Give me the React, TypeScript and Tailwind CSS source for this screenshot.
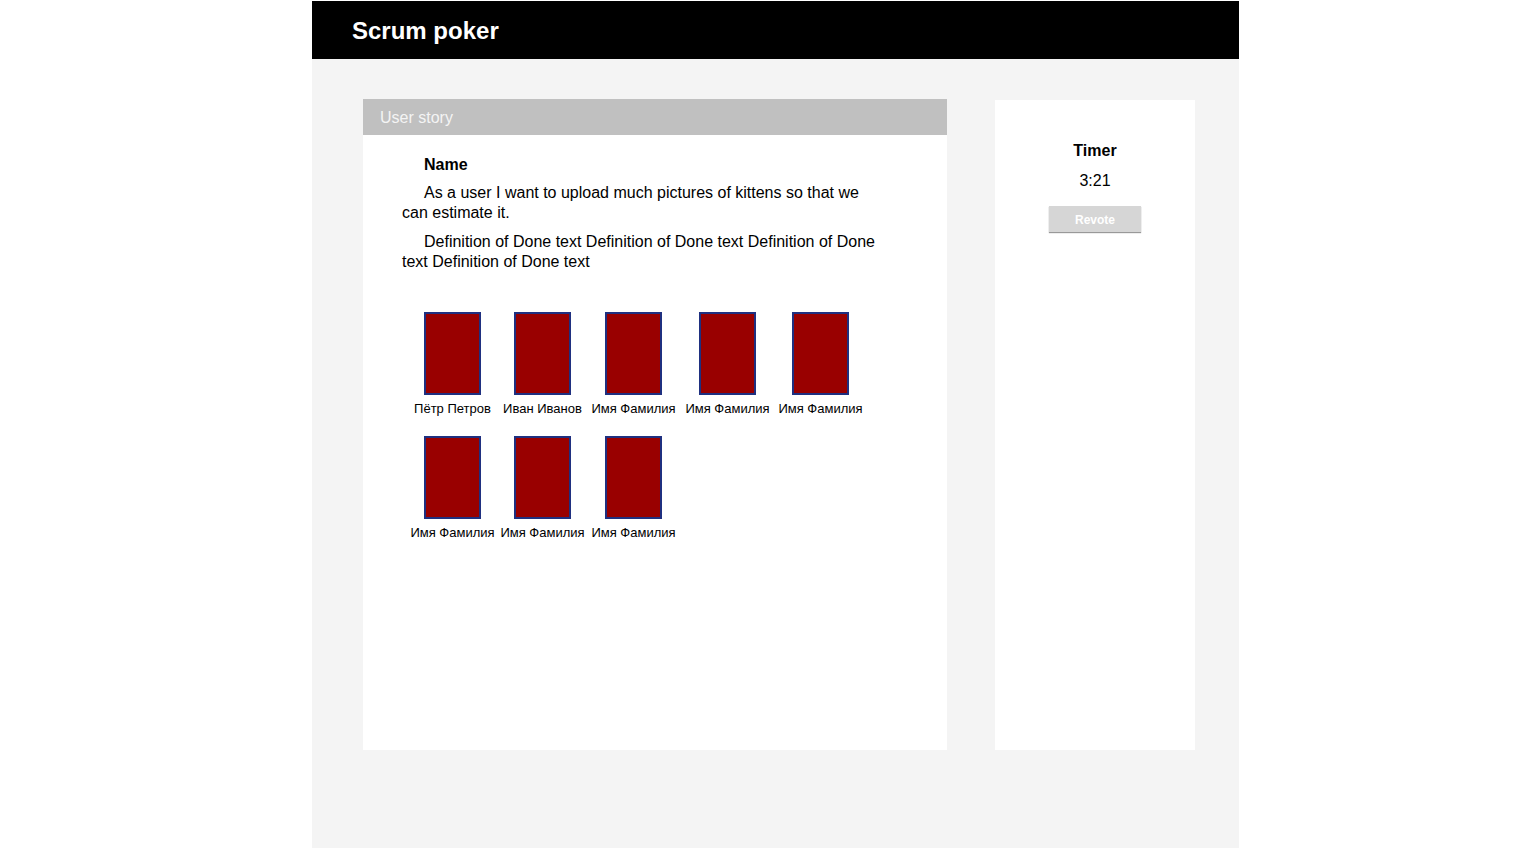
const row1 = [
    { name: "Пётр Петров", gap: "ml-0" },
    { name: "Иван Иванов", gap: "ml-[33px]" },
    { name: "Имя Фамилия", gap: "ml-[34px]" },
    { name: "Имя Фамилия", gap: "ml-[37px]" },
    { name: "Имя Фамилия", gap: "ml-[36px]" },
];

const row2 = [
    { name: "Имя Фамилия", gap: "ml-0" },
    { name: "Имя Фамилия", gap: "ml-[33px]" },
    { name: "Имя Фамилия", gap: "ml-[34px]" },
];

function PlayerCard({ name, gap }: { name: string; gap: string }) {
    return (
        <div className={`flex flex-col items-center w-[57px] ${gap}`}>
            <div className="w-[57px] h-[83px] bg-[#990000] border-2 border-[#1f3080]" />
            <span className="mt-[6px] text-[13px] leading-[15px] text-black whitespace-nowrap">{name}</span>
        </div>
    );
}

export default function App() {
    return (
        <div className="bg-white min-h-[848px] font-['Liberation_Sans',Arial,sans-serif]">
            <div className="w-[927px] ml-[312px] mt-px min-h-[847px] bg-[#f4f4f4]">
                {/* Top bar */}
                <header className="h-[58px] bg-black flex items-center pl-[40px] pt-[2px]">
                    <h1 className="text-white text-[24px] font-bold leading-none">Scrum poker</h1>
                </header>

                <div className="flex pt-[40px] pl-[51px]">
                    {/* User story panel */}
                    <section className="w-[584px] h-[651px] bg-white flex flex-col">
                        <div className="h-[36px] bg-[#c0c0c0] flex items-center pl-[17px] pt-[2px]">
                            <span className="text-[#f4f4f4] text-[16px]">User story</span>
                        </div>
                        <div className="pl-[39px] pt-[20px]">
                            <div className="w-[482px] text-[16px] leading-[20px] text-black">
                                <div className="font-bold pl-[22px]">Name</div>
                                <p className="indent-[22px] mt-[8px]">
                                    As a user I want to upload much pictures of kittens so that we can estimate it.
                                </p>
                                <p className="indent-[22px] mt-[9px]">
                                    Definition of Done text Definition of Done text Definition of Done text Definition of Done text
                                </p>
                            </div>
                            <div className="pl-[22px] pt-[40px] flex flex-col gap-[20px]">
                                <div className="flex">
                                    {row1.map((p, i) => (
                                        <PlayerCard key={i} name={p.name} gap={p.gap} />
                                    ))}
                                </div>
                                <div className="flex">
                                    {row2.map((p, i) => (
                                        <PlayerCard key={i} name={p.name} gap={p.gap} />
                                    ))}
                                </div>
                            </div>
                        </div>
                    </section>

                    {/* Timer panel */}
                    <aside className="ml-[48px] mt-px w-[200px] h-[650px] bg-white flex flex-col items-center pt-[41px]">
                        <div className="text-[16px] font-bold leading-[20px] text-black">Timer</div>
                        <div className="mt-[10px] text-[16px] leading-[20px] text-black">3:21</div>
                        <button className="mt-[15px] w-[92px] h-[26px] pt-px bg-[#d6d6d6] text-white text-[12px] font-bold shadow-[0_1px_1px_rgba(0,0,0,0.4)]">
                            Revote
                        </button>
                    </aside>
                </div>
            </div>
        </div>
    );
}
